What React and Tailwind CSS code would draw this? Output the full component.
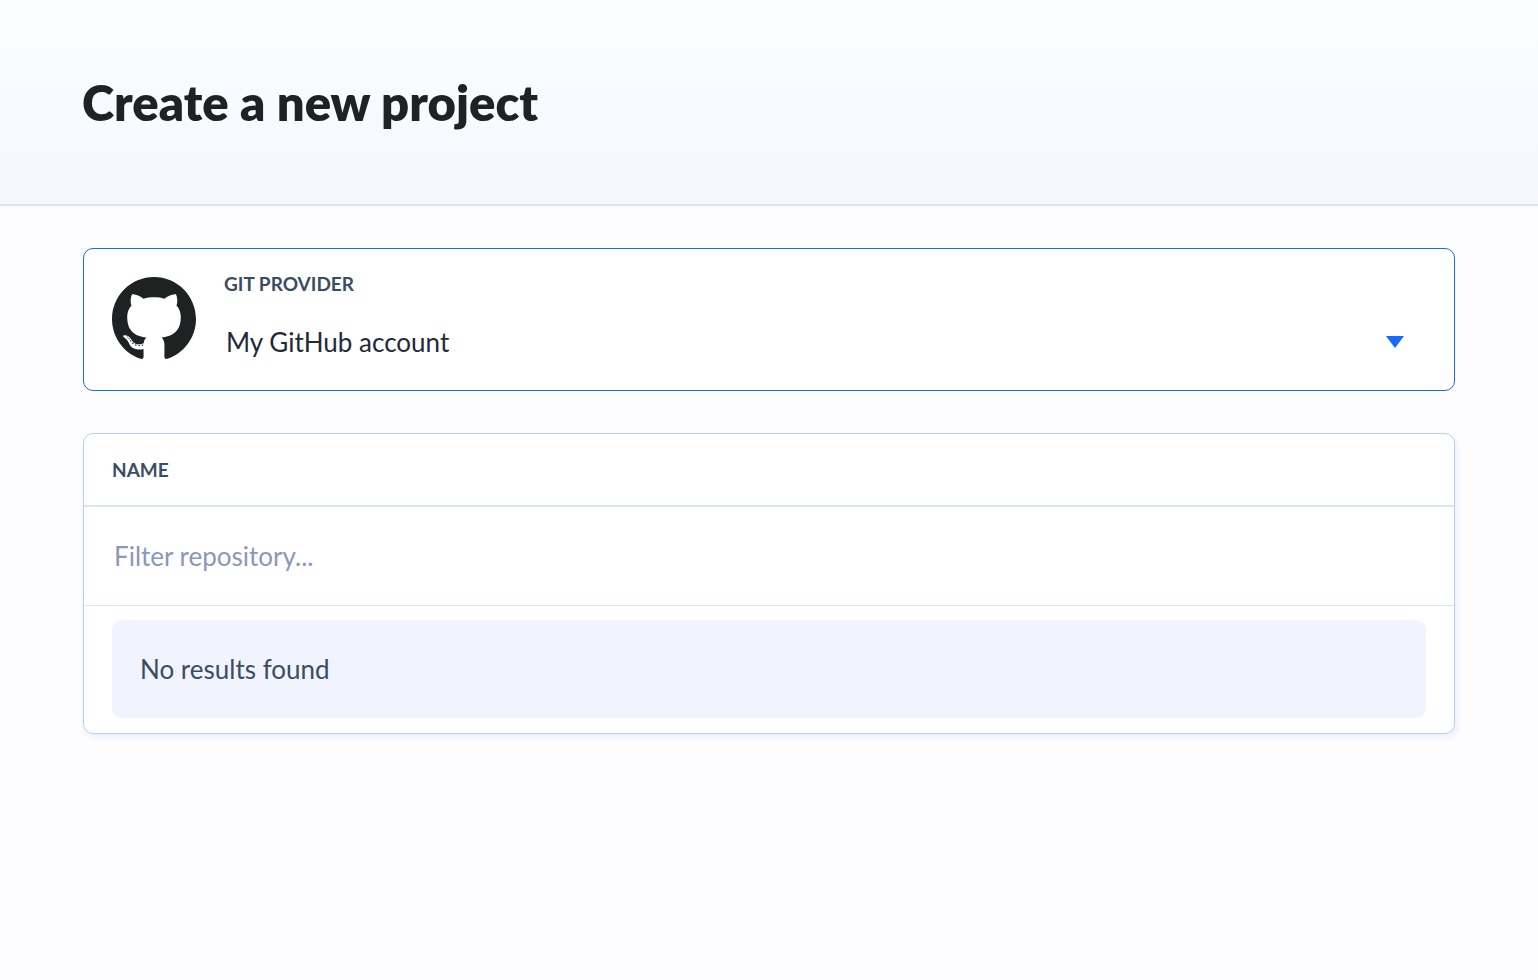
import { useState } from "react";

const accounts = ["My GitHub account"];

function GithubLogo() {
  return (
    <svg viewBox="3.6 5.1 120.8 120.8" className="size-[84px] shrink-0 fill-[#1f2223]" aria-hidden="true">
      <path d="M64 5.103c-33.347 0-60.388 27.035-60.388 60.388 0 26.682 17.303 49.317 41.297 57.303 3.017.56 4.125-1.31 4.125-2.905 0-1.44-.056-6.197-.082-11.243-16.8 3.653-20.345-7.125-20.345-7.125-2.747-6.98-6.705-8.836-6.705-8.836-5.48-3.748.413-3.67.413-3.67 6.063.425 9.257 6.223 9.257 6.223 5.386 9.23 14.127 6.562 17.573 5.02.542-3.903 2.107-6.568 3.834-8.076-13.413-1.525-27.514-6.704-27.514-29.843 0-6.593 2.36-11.98 6.223-16.21-.628-1.52-2.695-7.662.584-15.98 0 0 5.07-1.623 16.61 6.19C53.7 35 58.867 34.327 64 34.304c5.13.023 10.3.694 15.127 2.033 11.526-7.813 16.59-6.19 16.59-6.19 3.287 8.317 1.22 14.46.593 15.98 3.872 4.23 6.215 9.617 6.215 16.21 0 23.194-14.127 28.3-27.574 29.796 2.167 1.874 4.097 5.55 4.097 11.183 0 8.08-.07 14.583-.07 16.572 0 1.607 1.088 3.49 4.148 2.897 23.98-7.994 41.263-30.622 41.263-57.294C124.388 32.14 97.35 5.104 64 5.104z" />
      <path d="M26.484 91.806c-.133.3-.605.39-1.035.185-.44-.196-.685-.605-.543-.906.13-.31.603-.395 1.04-.188.44.197.69.61.537.91zm2.446 2.729c-.287.267-.85.143-1.232-.28-.396-.42-.47-.983-.177-1.254.298-.266.844-.14 1.24.28.394.426.472.984.17 1.255zM31.312 98.012c-.37.258-.976.017-1.35-.52-.37-.538-.37-1.183.01-1.44.373-.258.97-.025 1.35.507.368.545.368 1.19-.01 1.452zm3.261 3.361c-.33.365-1.036.267-1.552-.23-.527-.487-.674-1.18-.343-1.544.336-.366 1.045-.264 1.564.23.527.486.686 1.18.333 1.543zm4.5 1.951c-.147.473-.825.688-1.51.486-.683-.207-1.13-.76-.99-1.238.14-.477.823-.7 1.512-.485.683.206 1.13.756.988 1.237zm4.943.361c.017.498-.563.91-1.28.92-.723.017-1.308-.387-1.315-.877 0-.503.568-.91 1.29-.924.717-.013 1.306.387 1.306.88zm4.598-.782c.086.485-.413.984-1.126 1.117-.7.13-1.35-.172-1.44-.653-.086-.498.422-.997 1.122-1.126.714-.123 1.354.17 1.444.663z" />
    </svg>
  );
}

export default function App() {
  const [account, setAccount] = useState(accounts[0]);
  const [filter, setFilter] = useState("");

  return (
    <div className="min-h-screen bg-[#fdfdff] font-['Lato',sans-serif] text-[26px] leading-8 text-[#1f2223]">
      <header className="border-b-2 border-[#d8e6f8] bg-linear-to-b from-[#fcfdff] to-[#f6f7ff] px-[82px] pt-[70px] pb-[70px]">
        <h1 className="text-[49px] leading-[64px] font-extrabold">Create a new project</h1>
      </header>

      <main className="flex flex-col gap-[42px] px-[83px] py-[42px]">
        <section className="flex items-start gap-7 rounded-[10px] border border-[#1768ff] bg-white p-7">
          <GithubLogo />
          <div className="min-w-0 flex-1">
            <label htmlFor="provider" className="block text-[19px] leading-[14px] font-bold text-[#3a4d63] uppercase">
              Git provider
            </label>
            <div className="relative mt-[31px]">
              <select
                id="provider"
                value={account}
                onChange={(e) => setAccount(e.target.value)}
                className="block h-10 w-full appearance-none bg-transparent px-0.5 text-[#1f2a3a] outline-none"
              >
                {accounts.map((name) => (
                  <option key={name}>{name}</option>
                ))}
              </select>
              <svg viewBox="0 0 18 12" className="pointer-events-none absolute top-3.5 right-[22px] h-3 w-[18px] fill-[#1768ff]" aria-hidden="true">
                <path d="M0 0h18L9 12z" />
              </svg>
            </div>
          </div>
        </section>

        <section className="rounded-[10px] border border-[#b9cef2] bg-white shadow-[2px_3px_6px_#e9eefd]">
          <h2 className="border-b-2 border-[#d8e5fa] px-7 pt-5 pb-[19px] text-[19px] font-bold text-[#3a4d63] uppercase">
            Name
          </h2>
          <input
            type="text"
            aria-label="Filter repository"
            placeholder="Filter repository..."
            value={filter}
            onChange={(e) => setFilter(e.target.value)}
            className="block h-[99px] w-full border-b border-[#d8e5fa] px-[30px] outline-none placeholder:text-[#8b98b9]"
          />
          <div className="px-7 pt-3.5 pb-[15px]">
            <p className="rounded-[10px] bg-[#f1f3ff] px-7 py-[33px] text-[#3a4d63]">No results found</p>
          </div>
        </section>
      </main>
    </div>
  );
}
